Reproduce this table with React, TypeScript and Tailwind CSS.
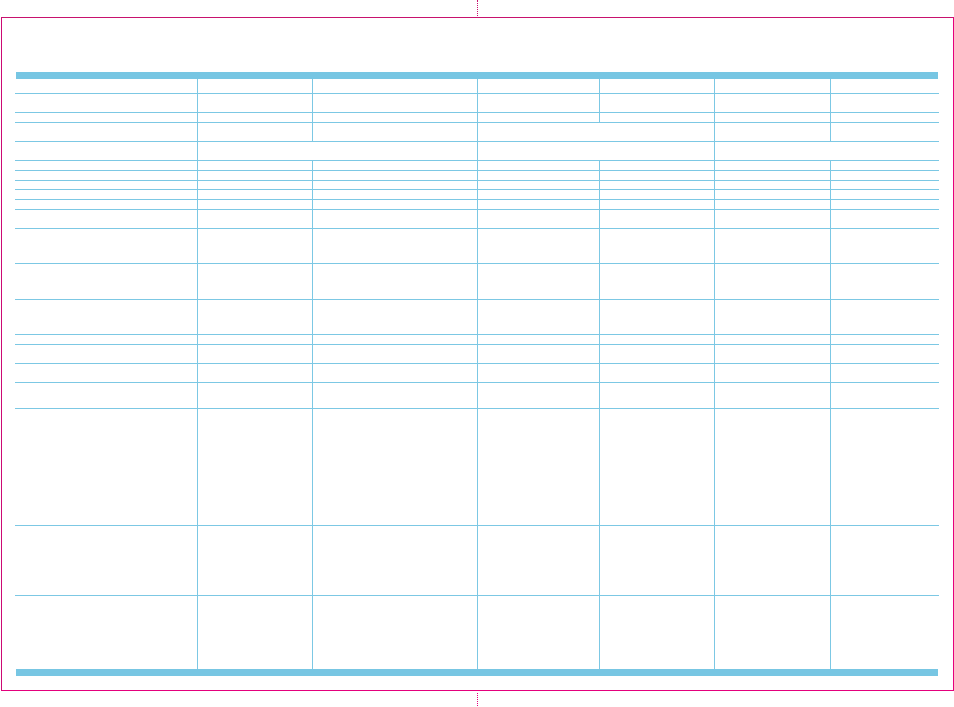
const colWidths = "grid-cols-[183px_115px_165px_122px_115px_116px_108px]";

// each row: height in px (border included) and the column spans of its cells
const rows: { h: string; spans: number[] }[] = [
  { h: "h-[15px]", spans: [1, 1, 1, 1, 1, 1, 1] },
  { h: "h-[19px]", spans: [1, 1, 1, 1, 1, 1, 1] },
  { h: "h-[10px]", spans: [1, 1, 1, 1, 1, 1, 1] },
  { h: "h-[19px]", spans: [1, 1, 1, 2, 1, 1] },
  { h: "h-[19px]", spans: [1, 2, 2, 2] },
  { h: "h-[10px]", spans: [1, 1, 1, 1, 1, 1, 1] },
  { h: "h-[10px]", spans: [1, 1, 1, 1, 1, 1, 1] },
  { h: "h-[9px]", spans: [1, 1, 1, 1, 1, 1, 1] },
  { h: "h-[10px]", spans: [1, 1, 1, 1, 1, 1, 1] },
  { h: "h-[10px]", spans: [1, 1, 1, 1, 1, 1, 1] },
  { h: "h-[19px]", spans: [1, 1, 1, 1, 1, 1, 1] },
  { h: "h-[35px]", spans: [1, 1, 1, 1, 1, 1, 1] },
  { h: "h-[36px]", spans: [1, 1, 1, 1, 1, 1, 1] },
  { h: "h-[35px]", spans: [1, 1, 1, 1, 1, 1, 1] },
  { h: "h-[10px]", spans: [1, 1, 1, 1, 1, 1, 1] },
  { h: "h-[19px]", spans: [1, 1, 1, 1, 1, 1, 1] },
  { h: "h-[19px]", spans: [1, 1, 1, 1, 1, 1, 1] },
  { h: "h-[26px]", spans: [1, 1, 1, 1, 1, 1, 1] },
  { h: "h-[117px]", spans: [1, 1, 1, 1, 1, 1, 1] },
  { h: "h-[70px]", spans: [1, 1, 1, 1, 1, 1, 1] },
  { h: "h-[73px]", spans: [1, 1, 1, 1, 1, 1, 1] },
];

const spanClass: Record<number, string> = {
  1: "col-span-1",
  2: "col-span-2",
};

export default function App() {
  return (
    <div className="w-[954px] h-[707px] bg-white flex flex-col font-['Liberation_Sans',sans-serif]">
      {/* top crop mark */}
      <div className="h-[17px] pl-[477px]">
        <div className="h-[16px] border-l border-dotted border-[#c8126e]" />
      </div>

      {/* sheet */}
      <div className="ml-[1px] w-[953px] h-[674px] border border-t-[#c8126e] border-l-[#cc0a74] border-r-[#e4007c] border-b-[#e4007c] pt-[54px] pl-[13px]">
        <div className="w-[923px]">
          <div className="ml-[1px] h-[7px] bg-[#77c6e3]" />

          <div className={`grid ${colWidths}`}>
            {rows.map((row, r) => {
              const lastRow = r === rows.length - 1;
              return row.spans.map((span, c) => {
                const lastCol = c === row.spans.length - 1;
                return (
                  <div
                    key={`${r}-${c}`}
                    className={`${row.h} ${spanClass[span]} border-[#7cc8e4] ${
                      lastCol ? "" : "border-r"
                    } ${lastRow ? "" : "border-b"}`}
                  />
                );
              });
            })}
          </div>

          <div className="ml-[1px] h-[7px] bg-[#77c6e3]" />
        </div>
      </div>

      {/* bottom crop mark */}
      <div className="pt-[2px] pl-[477px]">
        <div className="h-[13px] border-l border-dotted border-[#e4007c]" />
      </div>
    </div>
  );
}
